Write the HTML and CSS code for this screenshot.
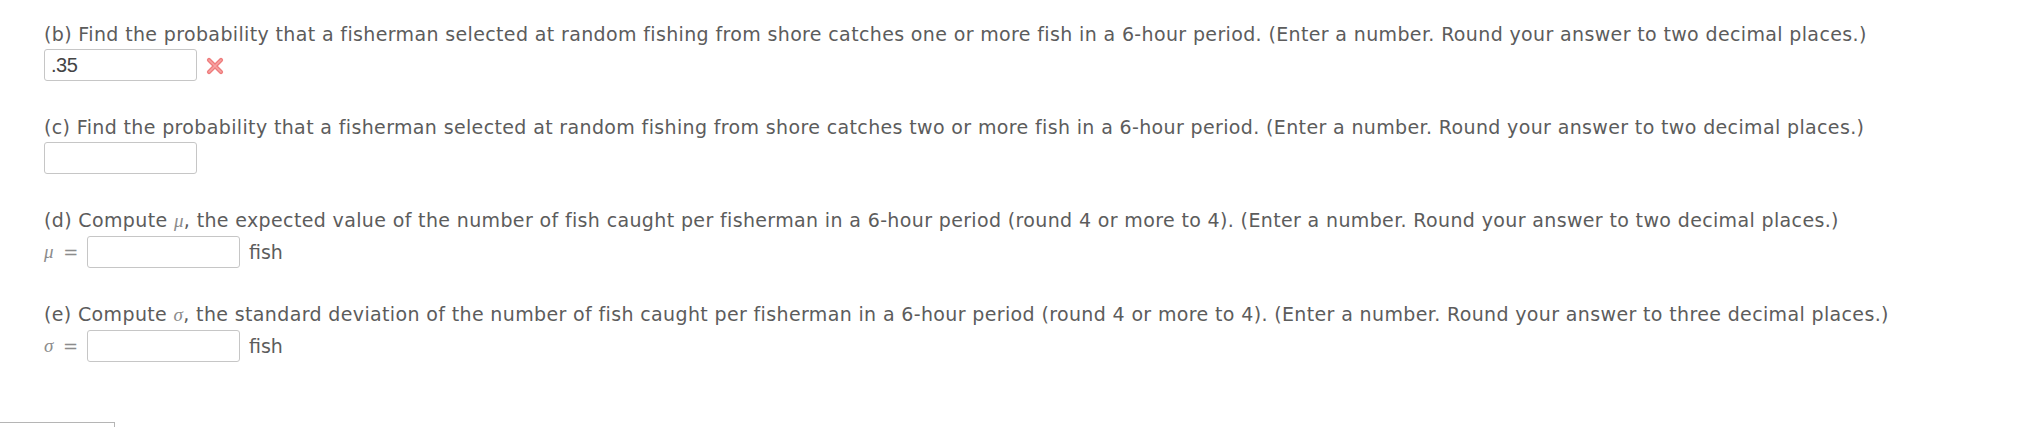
FILE: index.html
```html
<!DOCTYPE html>
<html>
<head>
<meta charset="utf-8">
<link rel="stylesheet" href="styles.css">
</head>
<body>
<div class="page">
  <div class="part">
    <div class="q">(b) Find the probability that a fisherman selected at random fishing from shore catches one or more fish in a 6-hour period. (Enter a number. Round your answer to two decimal places.)</div>
    <div class="row">
      <span class="box filled">.35</span>
      <svg class="wrong" width="20" height="18" viewBox="0 0 20 18"><path d="M4 3 L16 15 M16 3 L4 15" stroke="#ee7b7b" stroke-width="4.2" stroke-linecap="round"/><path d="M4 3 L16 15 M16 3 L4 15" stroke="#f7a3a3" stroke-width="1.6" stroke-linecap="round"/></svg>
    </div>
  </div>
  <div class="part">
    <div class="q">(c) Find the probability that a fisherman selected at random fishing from shore catches two or more fish in a 6-hour period. (Enter a number. Round your answer to two decimal places.)</div>
    <div class="row">
      <span class="box"></span>
    </div>
  </div>
  <div class="part">
    <div class="q">(d) Compute <span class="m">μ</span>, the expected value of the number of fish caught per fisherman in a 6-hour period (round 4 or more to 4). (Enter a number. Round your answer to two decimal places.)</div>
    <div class="row">
      <span class="lbl"><span class="m">μ</span> =</span>
      <span class="box"></span>
      <span class="unit">fish</span>
    </div>
  </div>
  <div class="part">
    <div class="q">(e) Compute <span class="m">σ</span>, the standard deviation of the number of fish caught per fisherman in a 6-hour period (round 4 or more to 4). (Enter a number. Round your answer to three decimal places.)</div>
    <div class="row">
      <span class="lbl"><span class="m">σ</span> =</span>
      <span class="box"></span>
      <span class="unit">fish</span>
    </div>
  </div>
</div>
<div class="actions"><button class="submit">Submit Answer</button></div>
</body>
</html>
```
FILE: styles.css
```css
html, body {
  margin: 0;
  padding: 0;
  background: #fff;
}
body {
  font-family: "DejaVu Sans", Verdana, sans-serif;
  font-size: 19px;
  color: #5c5c5c;
  overflow: hidden;
  height: 427px;
}
.page {
  display: flex;
  flex-direction: column;
  gap: 34px;
  padding: 22px 0 0 44px;
}
.q {
  line-height: 24px;
  white-space: nowrap;
  letter-spacing: 0.36px;
}
.m {
  font-family: "Liberation Serif", "DejaVu Serif", serif;
  font-style: italic;
  color: #8c8c8c;
}
.row {
  display: flex;
  align-items: center;
  margin-top: 3px;
  height: 32px;
}
.box {
  box-sizing: border-box;
  width: 153px;
  height: 32px;
  border: 1px solid #c6c6c6;
  border-radius: 3px;
  font-family: "Liberation Sans", Arial, sans-serif;
  font-size: 20px;
  color: #444;
  padding: 3px 6px;
  line-height: 24px;
  letter-spacing: -0.5px;
}
.wrong {
  margin-left: 8px;
  margin-top: 2px;
}
.lbl {
  width: 43px;
  color: #8c8c8c;
  font-size: 18px;
}
.lbl .m {
  font-size: 19px;
  margin-right: 4px;
}
.unit {
  margin-left: 9px;
  margin-top: -1px;
}
.actions {
  margin-top: 60px;
  margin-left: -27px;
}
.submit {
  display: block;
  width: 142px;
  height: 30px;
  background: #fff;
  border: 1px solid #b5b5b5;
  font-family: "DejaVu Sans", sans-serif;
  font-size: 14px;
  line-height: 18px;
  color: #333;
  text-align: left;
  padding: 4px 12px;
}
```
